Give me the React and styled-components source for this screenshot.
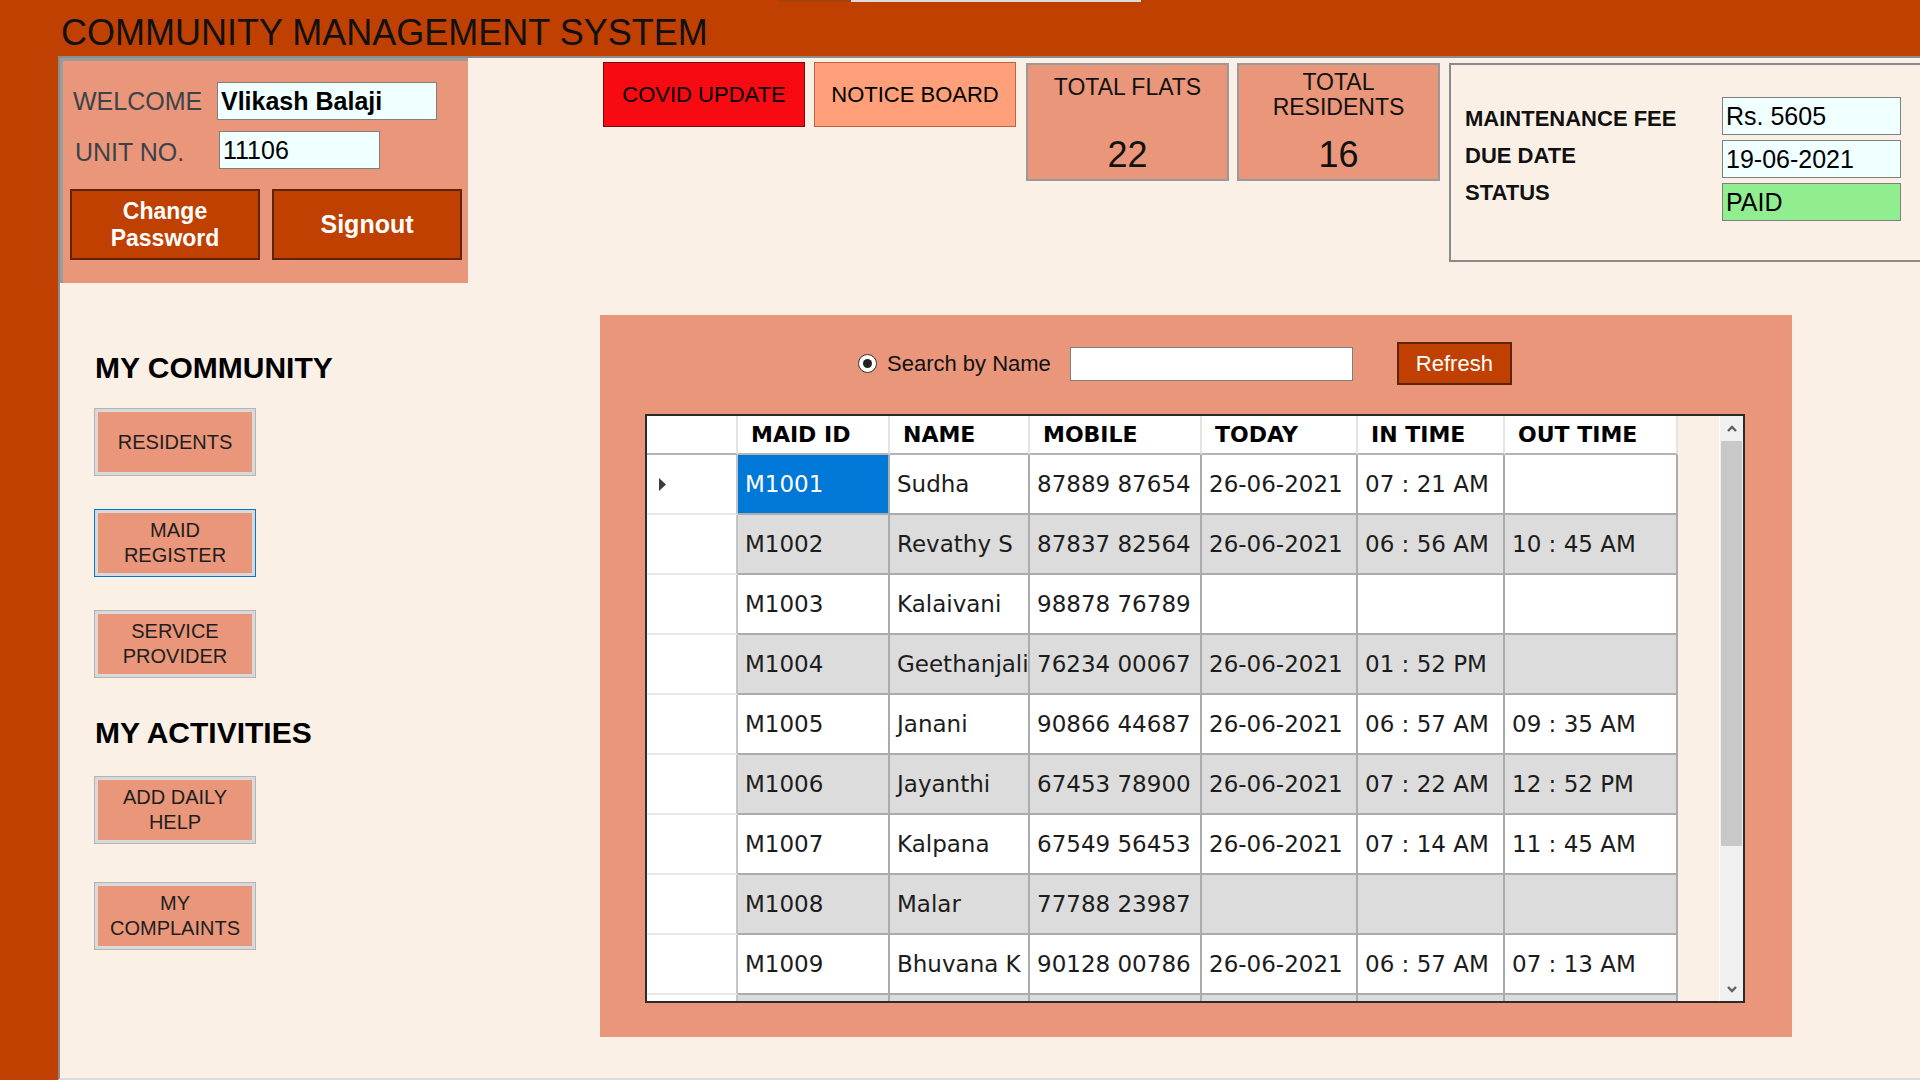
import React from 'react';
import styled, { createGlobalStyle } from 'styled-components';

const colors = {
  rust: '#BF4000',
  rustDark: '#5E2308',
  linen: '#FAF0E6',
  salmon: '#E9967A',
  lightSalmon: '#FFA07A',
  azure: '#F0FFFF',
  paid: '#90EE90',
  covid: '#F80A12',
  gridLine: '#ABABAB',
  gridAlt: '#DCDCDC',
  select: '#0078D7',
};

const arial = '"Liberation Sans", Arial, sans-serif';
const tahoma = '"DejaVu Sans", Verdana, sans-serif';

const GlobalStyle = createGlobalStyle`
  *, *::before, *::after { box-sizing: border-box; }
  html, body { margin: 0; padding: 0; }
  body {
    background: ${colors.rust};
    font-family: ${arial};
  }
`;

const Page = styled.div`
  width: 1920px;
  height: 1080px;
  overflow: hidden;
  display: flex;
  flex-direction: column;
  background: ${colors.rust};
`;

const Header = styled.header`
  position: relative;
  flex: none;
  height: 56px;
  padding: 15px 0 0 61px;
`;

const Title = styled.h1`
  margin: 0;
  font-size: 36px;
  line-height: 36px;
  font-weight: 400;
  color: #111;
`;

const TabStrip = styled.div`
  position: absolute;
  top: 0;
  left: 779px;
  display: flex;
  height: 2px;
`;

const TabSeg = styled.span`
  width: ${p => p.$w}px;
  background: ${p => p.$c};
`;

const Body = styled.div`
  flex: 1;
  display: flex;
  min-height: 0;
  padding-left: 58px;
`;

const Content = styled.main`
  flex: 1;
  display: flex;
  flex-direction: column;
  overflow: hidden;
  background: ${colors.linen};
  border-top: 2px solid #8c8c8c;
  border-left: 2px solid #8c8c8c;
  border-bottom: 2px solid #dcdcdc;
`;

const TopRow = styled.section`
  flex: none;
  height: 257px;
  display: flex;
  align-items: flex-start;
`;

const UserPanel = styled.div`
  flex: none;
  width: 408px;
  height: 225px;
  padding-top: 21px;
  background: ${colors.salmon};
  border-top: 3px solid #9b9b9b;
  border-left: 3px solid #9b9b9b;
`;

const FieldRow = styled.div`
  display: flex;
  align-items: center;
  height: 38px;
  margin-top: ${p => p.$top || 0}px;
  padding-left: ${p => p.$indent}px;
`;

const FieldLabel = styled.span`
  width: 144px;
  padding-top: ${p => p.$drop || 0}px;
  font-size: 25px;
  color: #3d4249;
`;

const TextBox = styled.div`
  width: ${p => p.$w}px;
  height: 38px;
  display: flex;
  align-items: center;
  padding-left: 3px;
  background: ${p => p.$bg || colors.azure};
  border: 1px solid #7f7f7f;
  font-size: 25px;
  font-weight: ${p => (p.$bold ? 700 : 400)};
  color: #000;
  white-space: nowrap;
`;

const ButtonRow = styled.div`
  display: flex;
  align-items: center;
  gap: 12px;
  margin-top: 20px;
  padding-left: 7px;
`;

const ActionButton = styled.button`
  width: 190px;
  height: 71px;
  padding: 0;
  background: ${colors.rust};
  border: 2px solid ${colors.rustDark};
  color: #fff;
  font-family: ${arial};
  font-size: ${p => p.$size}px;
  font-weight: 700;
  line-height: 27px;
`;

const TopButton = styled.button`
  flex: none;
  width: 202px;
  height: 65px;
  margin: 4px 0 0 ${p => p.$gap}px;
  padding: 0;
  background: ${p => p.$bg};
  border: 1px solid ${p => p.$edge};
  color: #000;
  font-family: ${arial};
  font-size: 22px;
`;

const StatBox = styled.div`
  flex: none;
  width: 203px;
  height: 118px;
  margin: 5px 0 0 ${p => p.$gap}px;
  padding: ${p => p.$top}px 0 6px;
  display: flex;
  flex-direction: column;
  align-items: center;
  justify-content: space-between;
  background: ${colors.salmon};
  border: 2px solid #9a9a9a;
`;

const StatLabel = styled.span`
  font-size: 23px;
  line-height: 25px;
  text-align: center;
  color: #111;
`;

const StatValue = styled.span`
  font-size: 36px;
  line-height: 36px;
  color: #111;
`;

const InfoBox = styled.div`
  flex: none;
  width: 520px;
  height: 199px;
  margin: 5px 0 0 9px;
  padding-left: 14px;
  display: flex;
  border: 2px solid #8a8a8a;
`;

const InfoLabels = styled.div`
  width: 257px;
  padding-top: 43px;
  display: flex;
  flex-direction: column;
  gap: 15px;
`;

const InfoLabel = styled.span`
  font-size: 22px;
  line-height: 22px;
  font-weight: 700;
  color: #111;
`;

const InfoValues = styled.div`
  padding-top: 32px;
  display: flex;
  flex-direction: column;
  gap: 5px;
`;

const MainRow = styled.section`
  flex: 1;
  display: flex;
  align-items: flex-start;
`;

const Nav = styled.nav`
  flex: none;
  width: 540px;
  padding: 38px 0 0 34px;
`;

const NavHeading = styled.h2`
  margin: ${p => p.$top || 0}px 0 ${p => p.$bottom}px 1px;
  font-size: 30px;
  line-height: 30px;
  font-weight: 700;
  color: #000;
`;

const NavGroup = styled.div`
  display: flex;
  flex-direction: column;
  gap: ${p => p.$gap}px;
`;

const NavButton = styled.button`
  width: 162px;
  height: 68px;
  padding: 0 6px;
  background: ${colors.salmon};
  border: 1px solid ${p => (p.$focused ? colors.select : '#b4b4b4')};
  box-shadow: inset 0 0 0 3px #d9d9d9;
  color: #1e1e1e;
  font-family: ${arial};
  font-size: 20px;
  line-height: 25px;
`;

const GridPanel = styled.div`
  flex: none;
  width: 1192px;
  height: 722px;
  padding: 27px 0 0 45px;
  background: ${colors.salmon};
`;

const SearchRow = styled.div`
  display: flex;
  align-items: center;
  height: 43px;
  padding-left: 213px;
`;

const Radio = styled.span`
  width: 19px;
  height: 19px;
  margin-right: 10px;
  border-radius: 50%;
  border: 1px solid #333;
  background: #fff;
  display: flex;
  align-items: center;
  justify-content: center;

  &::after {
    content: '';
    width: 9px;
    height: 9px;
    border-radius: 50%;
    background: #222;
  }
`;

const SearchLabel = styled.span`
  margin-right: 19px;
  font-size: 22px;
  color: #111;
`;

const SearchBox = styled.div`
  width: 283px;
  height: 34px;
  margin-right: 44px;
  background: #fff;
  border: 1px solid #7f7f7f;
`;

const RefreshButton = styled.button`
  width: 115px;
  height: 43px;
  padding: 0;
  background: ${colors.rust};
  border: 2px solid ${colors.rustDark};
  color: #fff;
  font-family: ${arial};
  font-size: 22px;
`;

const DataGrid = styled.div`
  width: 1100px;
  height: 589px;
  margin-top: 29px;
  display: flex;
  overflow: hidden;
  background: ${colors.linen};
  border: 2px solid #2b2b2b;
`;

const Table = styled.div`
  flex: none;
  width: 1031px;
  align-self: flex-start;
  display: grid;
  grid-template-columns: 91px 152px 140px 172px 156px 147px 173px;
  grid-template-rows: 39px;
  grid-auto-rows: 60px;
`;

const HeadCell = styled.div`
  display: flex;
  align-items: center;
  padding-left: 13px;
  background: #fff;
  border-right: 2px solid #e4e4e4;
  border-bottom: 2px solid #b4b4b4;
  font-family: ${tahoma};
  font-size: 22px;
  font-weight: 700;
  color: #000;
  white-space: nowrap;
`;

const RowHead = styled.div`
  display: flex;
  align-items: center;
  padding-left: 12px;
  background: #fff;
  border-right: 2px solid #c4c4c4;
  border-bottom: 2px solid #e8e8e8;
`;

const Cell = styled.div`
  display: flex;
  align-items: center;
  padding-left: 7px;
  overflow: hidden;
  white-space: nowrap;
  background: ${p => (p.$selected ? colors.select : p.$alt ? colors.gridAlt : '#fff')};
  color: ${p => (p.$selected ? '#fff' : '#1c1c1c')};
  border-right: 2px solid ${colors.gridLine};
  border-bottom: 2px solid ${colors.gridLine};
  font-family: ${tahoma};
  font-size: 23px;
`;

const Filler = styled.div`
  flex: 1;
`;

const ScrollBar = styled.div`
  flex: none;
  width: 24px;
  display: flex;
  flex-direction: column;
  background: #f0f0f0;
  border-left: 1px solid #fff;
`;

const ScrollArrow = styled.div`
  height: 25px;
  display: flex;
  align-items: center;
  justify-content: center;
`;

const Thumb = styled.div`
  height: 405px;
  margin: 0 1px;
  background: #c8c8c8;
`;

const Track = styled.div`
  flex: 1;
`;

const Chevron = ({ down }) => (
  <svg width="12" height="8" viewBox="0 0 12 8">
    <polyline
      points={down ? '2,2 6,6 10,2' : '2,6 6,2 10,6'}
      fill="none"
      stroke="#5f5f5f"
      strokeWidth="2.4"
    />
  </svg>
);

const RowPointer = () => (
  <svg width="8" height="13" viewBox="0 0 8 13">
    <polygon points="0,0 7,6.5 0,13" fill="#3c3c3c" />
  </svg>
);

const columns = ['MAID ID', 'NAME', 'MOBILE', 'TODAY', 'IN TIME', 'OUT TIME'];

const maids = [
  ['M1001', 'Sudha', '87889 87654', '26-06-2021', '07 : 21 AM', ''],
  ['M1002', 'Revathy S', '87837 82564', '26-06-2021', '06 : 56 AM', '10 : 45 AM'],
  ['M1003', 'Kalaivani', '98878 76789', '', '', ''],
  ['M1004', 'Geethanjali', '76234 00067', '26-06-2021', '01 : 52 PM', ''],
  ['M1005', 'Janani', '90866 44687', '26-06-2021', '06 : 57 AM', '09 : 35 AM'],
  ['M1006', 'Jayanthi', '67453 78900', '26-06-2021', '07 : 22 AM', '12 : 52 PM'],
  ['M1007', 'Kalpana', '67549 56453', '26-06-2021', '07 : 14 AM', '11 : 45 AM'],
  ['M1008', 'Malar', '77788 23987', '', '', ''],
  ['M1009', 'Bhuvana K', '90128 00786', '26-06-2021', '06 : 57 AM', '07 : 13 AM'],
  ['', '', '', '', '', ''],
];

export default function App() {
  return (
    <Page>
      <GlobalStyle />
      <Header>
        <TabStrip>
          <TabSeg $w={72} $c="#A8410F" />
          <TabSeg $w={290} $c="#DCDCDC" />
        </TabStrip>
        <Title>COMMUNITY MANAGEMENT SYSTEM</Title>
      </Header>

      <Body>
        <Content>
          <TopRow>
            <UserPanel>
              <FieldRow $indent={10}>
                <FieldLabel>WELCOME</FieldLabel>
                <TextBox $w={220} $bold>Vlikash Balaji</TextBox>
              </FieldRow>
              <FieldRow $indent={12} $top={11}>
                <FieldLabel $drop={4}>UNIT NO.</FieldLabel>
                <TextBox $w={161}>11106</TextBox>
              </FieldRow>
              <ButtonRow>
                <ActionButton $size={23}>Change<br />Password</ActionButton>
                <ActionButton $size={25}>Signout</ActionButton>
              </ButtonRow>
            </UserPanel>

            <TopButton $gap={135} $bg={colors.covid} $edge="#7a0a0a">COVID UPDATE</TopButton>
            <TopButton $gap={9} $bg={colors.lightSalmon} $edge="#c0643c">NOTICE BOARD</TopButton>

            <StatBox $gap={10} $top={10}>
              <StatLabel>TOTAL FLATS</StatLabel>
              <StatValue>22</StatValue>
            </StatBox>
            <StatBox $gap={8} $top={5}>
              <StatLabel>TOTAL<br />RESIDENTS</StatLabel>
              <StatValue>16</StatValue>
            </StatBox>

            <InfoBox>
              <InfoLabels>
                <InfoLabel>MAINTENANCE FEE</InfoLabel>
                <InfoLabel>DUE DATE</InfoLabel>
                <InfoLabel>STATUS</InfoLabel>
              </InfoLabels>
              <InfoValues>
                <TextBox $w={179}>Rs. 5605</TextBox>
                <TextBox $w={179}>19-06-2021</TextBox>
                <TextBox $w={179} $bg={colors.paid}>PAID</TextBox>
              </InfoValues>
            </InfoBox>
          </TopRow>

          <MainRow>
            <Nav>
              <NavHeading $bottom={25}>MY COMMUNITY</NavHeading>
              <NavGroup $gap={33}>
                <NavButton>RESIDENTS</NavButton>
                <NavButton $focused>MAID<br />REGISTER</NavButton>
                <NavButton>SERVICE<br />PROVIDER</NavButton>
              </NavGroup>
              <NavHeading $top={40} $bottom={28}>MY ACTIVITIES</NavHeading>
              <NavGroup $gap={38}>
                <NavButton>ADD DAILY<br />HELP</NavButton>
                <NavButton>MY<br />COMPLAINTS</NavButton>
              </NavGroup>
            </Nav>

            <GridPanel>
              <SearchRow>
                <Radio />
                <SearchLabel>Search by Name</SearchLabel>
                <SearchBox />
                <RefreshButton>Refresh</RefreshButton>
              </SearchRow>

              <DataGrid>
                <Table>
                  <HeadCell />
                  {columns.map(c => (
                    <HeadCell key={c}>{c}</HeadCell>
                  ))}
                  {maids.map((row, i) => (
                    <React.Fragment key={i}>
                      <RowHead>{i === 0 && <RowPointer />}</RowHead>
                      {row.map((v, j) => (
                        <Cell key={j} $alt={i % 2 === 1} $selected={i === 0 && j === 0}>
                          {v}
                        </Cell>
                      ))}
                    </React.Fragment>
                  ))}
                </Table>
                <Filler />
                <ScrollBar>
                  <ScrollArrow><Chevron /></ScrollArrow>
                  <Thumb />
                  <Track />
                  <ScrollArrow><Chevron down /></ScrollArrow>
                </ScrollBar>
              </DataGrid>
            </GridPanel>
          </MainRow>
        </Content>
      </Body>
    </Page>
  );
}
